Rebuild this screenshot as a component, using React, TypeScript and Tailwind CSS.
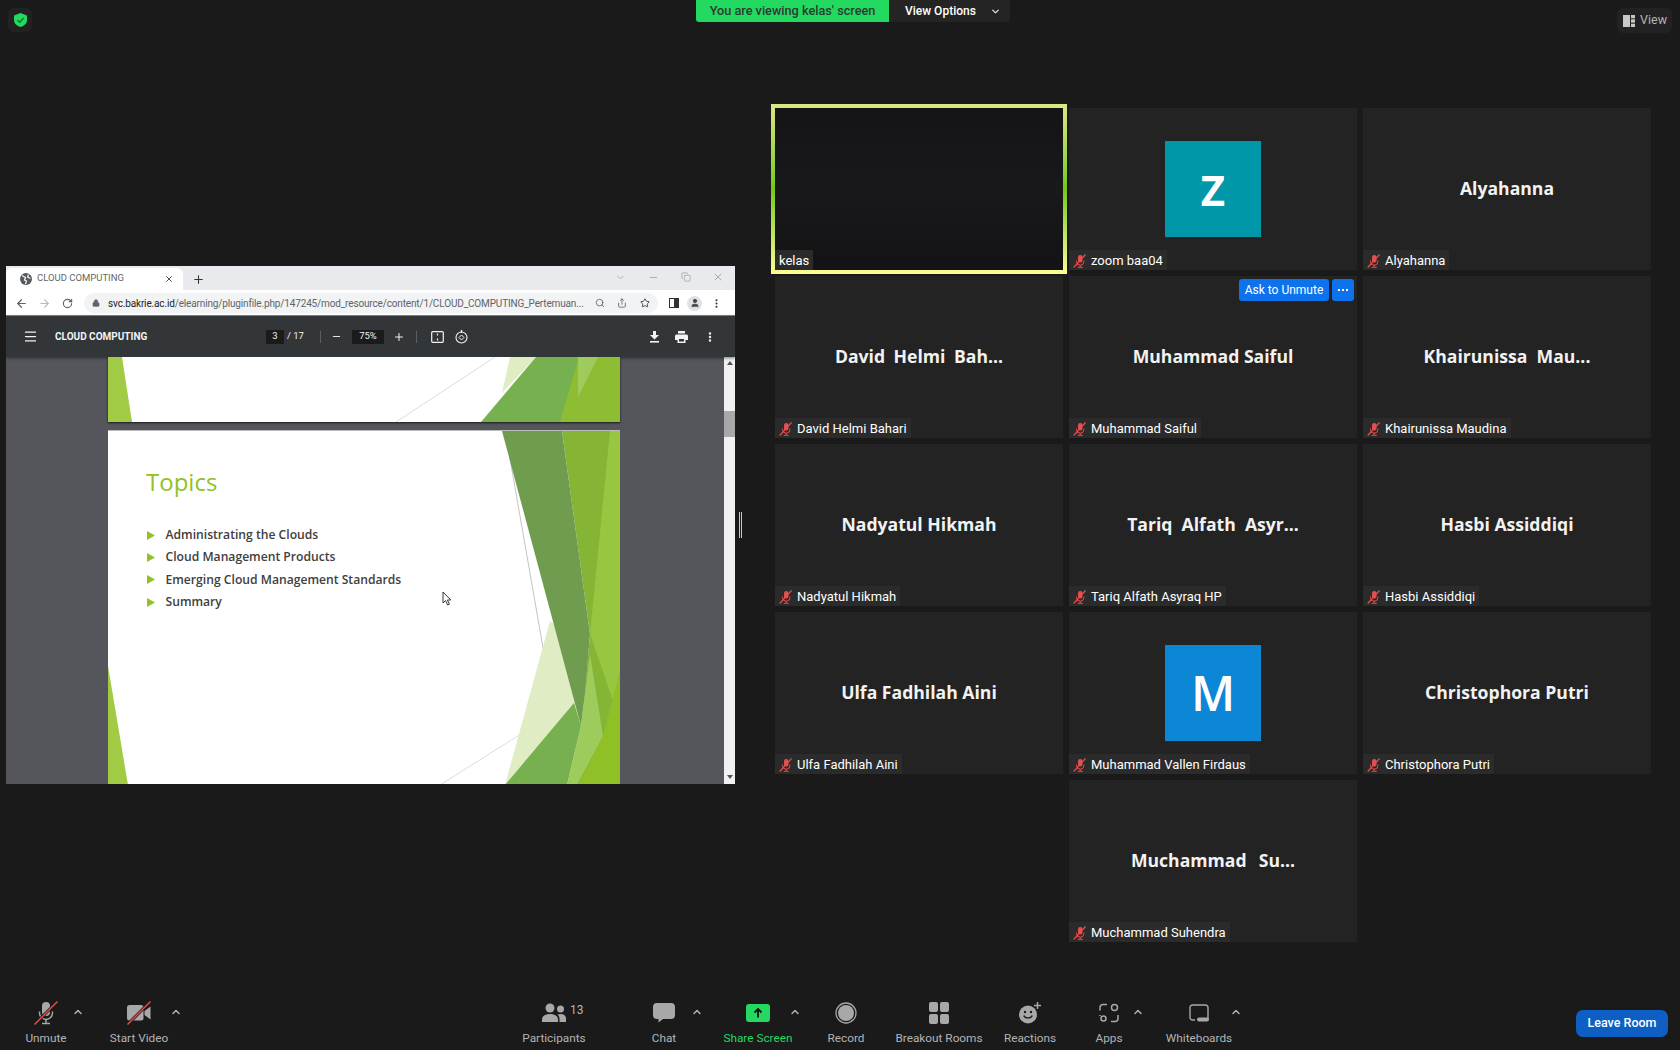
import React from "react";
import { X, Plus, ChevronDown, Minus, Copy, ArrowLeft, ArrowRight, RotateCw, Lock, Search, Share, Star, User, MoreVertical, Menu, ChevronUp } from "lucide-react";

const MutedMic = ({ size = 24 }: { size?: number }) => (
  <svg width={size} height={size} viewBox="0 0 24 24" fill="none">
    <rect x="8" y="1" width="8" height="14" rx="4" fill="currentColor" />
    <path d="M5.5 10.5v1.5a6.5 6.5 0 0 0 13 0v-1.5" stroke="currentColor" strokeWidth="1.4" />
    <path d="M12 18.5V22M8 22.5h8" stroke="currentColor" strokeWidth="1.5" />
    <path d="M0.5 23.5 23.5 0.5" stroke="#1a1a1a" strokeWidth="3" />
    <path d="M0.5 23.5 23.5 0.5" stroke="#e5484d" strokeWidth="1.5" />
  </svg>
);

const SmallMic = () => (
  <svg width="14" height="14" viewBox="0 0 14 14" fill="none" className="shrink-0">
    <rect x="5" y="1" width="4.5" height="7.5" rx="2.2" fill="#e2504f" />
    <path d="M3.5 6.5v1a3.7 3.7 0 0 0 7.4 0v-1M7.2 11v2M4.8 13.3h5" stroke="#e2504f" strokeWidth="1" />
    <path d="M0.7 13.5 12.5 0.5" stroke="#e2504f" strokeWidth="1.2" />
  </svg>
);

const MutedVideo = () => (
  <svg width="24" height="24" viewBox="0 0 24 24" fill="none">
    <rect x="0" y="4" width="16.5" height="15.5" rx="2.5" fill="#a8a8a8" />
    <path d="M17.5 10 23.5 5.5V18.5L17.5 14Z" fill="#a8a8a8" />
    <path d="M0.5 23.5 23.5 0.5" stroke="#1a1a1a" strokeWidth="3" />
    <path d="M0.5 23.5 23.5 0.5" stroke="#e5484d" strokeWidth="1.5" />
  </svg>
);

const PeopleIcon = () => (
  <svg width="24" height="20" viewBox="0 0 24 20" fill="#a8a8a8">
    <circle cx="8" cy="5" r="4.5" />
    <path d="M0 19v-2.5C0 13 3.5 11 8 11s8 2 8 5.5V19Z" />
    <circle cx="18.5" cy="6" r="3.5" />
    <path d="M17.5 19v-3c0-2-.8-3.4-2-4.5 1-.4 2-.6 3.2-.6 3.2 0 5.3 1.8 5.3 4.5V19Z" />
  </svg>
);

const ChatIcon = () => (
  <svg width="22" height="20" viewBox="0 0 22 20" fill="#a8a8a8">
    <path d="M4 0h14a4 4 0 0 1 4 4v8a4 4 0 0 1-4 4h-8l-4.5 3.5V16H4a4 4 0 0 1-4-4V4a4 4 0 0 1 4-4Z" />
  </svg>
);

const ShareIcon = () => (
  <svg width="24" height="18" viewBox="0 0 24 18">
    <rect width="24" height="18" rx="3" fill="#23d95f" />
    <path d="M12 13.5V5M8.5 8.5 12 5l3.5 3.5" stroke="#111" strokeWidth="1.8" fill="none" />
  </svg>
);

const RecordIcon = () => (
  <svg width="22" height="22" viewBox="0 0 22 22">
    <circle cx="11" cy="11" r="10" fill="none" stroke="#a8a8a8" strokeWidth="1.3" />
    <circle cx="11" cy="11" r="8" fill="#a8a8a8" />
  </svg>
);

const BreakoutIcon = () => (
  <svg width="20" height="22" viewBox="0 0 20 22" fill="#a8a8a8">
    <rect width="9" height="10" rx="2" />
    <rect x="11" width="9" height="10" rx="2" />
    <rect y="12" width="9" height="10" rx="2" />
    <rect x="11" y="12" width="9" height="10" rx="2" />
  </svg>
);

const ReactionIcon = () => (
  <svg width="24" height="24" viewBox="0 0 24 24">
    <circle cx="10" cy="13.5" r="9" fill="#a8a8a8" />
    <circle cx="7" cy="11" r="1.2" fill="#1a1a1a" />
    <circle cx="13" cy="11" r="1.2" fill="#1a1a1a" />
    <path d="M5.8 14.5c1 3.2 7.4 3.2 8.4 0" stroke="#1a1a1a" strokeWidth="1.3" fill="none" />
    <path d="M19.5 1v7M16 4.5h7" stroke="#a8a8a8" strokeWidth="1.5" />
  </svg>
);

const AppsIcon = () => (
  <svg width="20" height="20" viewBox="0 0 20 20" fill="none" stroke="#a8a8a8" strokeWidth="1.5">
    <path d="M8 1.5H4A3 3 0 0 0 1 4.5v3M1 12v1M12 18.5h4a3 3 0 0 0 3-3V12" />
    <circle cx="15.5" cy="4.5" r="3" />
    <circle cx="4.5" cy="15.5" r="2.5" />
  </svg>
);

const BoardIcon = () => (
  <svg width="20" height="18" viewBox="0 0 20 18" fill="none">
    <path d="M6 16H3.5A2.5 2.5 0 0 1 1 13.5V3.5A2.5 2.5 0 0 1 3.5 1h13A2.5 2.5 0 0 1 19 3.5v12" stroke="#a8a8a8" strokeWidth="1.4" />
    <rect x="8" y="13.5" width="12" height="4" rx="2" fill="#a8a8a8" />
  </svg>
);

const Caret = ({ cls }: { cls: string }) => (
  <div className={`w-[12px] h-[22px] flex items-center justify-center text-[#b0b0b0] ${cls}`}>
    <ChevronUp size={12} strokeWidth={3} />
  </div>
);

const Tool = ({ label, cls, color, children }: { label: string; cls: string; color?: string; children: React.ReactNode }) => (
  <div className={`flex flex-col items-center shrink-0 ${cls}`}>
    <div className="h-[24px] flex items-center justify-center relative">{children}</div>
    <div className={`mt-[5px] text-[11.8px] leading-[16px] whitespace-nowrap font-['Roboto',sans-serif] ${color ?? "text-[#b4b4b4]"}`}>{label}</div>
  </div>
);

const Cell = ({ name, nameCls, label, avatar, avatarColor, ask, active, start }: { name?: string; nameCls?: string; label: string; avatar?: string; avatarColor?: string; ask?: boolean; active?: boolean; start?: boolean }) => (
  <div className={`relative h-[162px] flex items-center justify-center ${start ? "col-start-2" : ""}`}>
    {active && (
      <div className="absolute -inset-[4px] bg-linear-to-b from-[#dde882] via-[#74c80e] to-[#fdfd92]" />
    )}
    <div className={`absolute inset-0 ${active ? "bg-linear-to-b from-[#141416] via-[#19191b] to-[#131315]" : "bg-[#232323]"}`} />
    {name && <div className={`relative pb-[2px] text-[17.6px] font-bold text-[#f2f2f2] whitespace-pre ${nameCls ?? ""}`}>{name}</div>}
    {avatar && (
      <div className={`relative w-[96px] h-[96px] flex items-center justify-center text-white ${avatarColor}`}>{avatar}</div>
    )}
    <div className="absolute left-0 bottom-0 h-[20px] bg-[#2b2b2b] flex items-center gap-[4px] pl-[4px] pr-[4px] pt-[1px] text-[13px] text-white whitespace-nowrap font-['Roboto',sans-serif]">
      {!active && <SmallMic />}
      <span>{label}</span>
    </div>
    {ask && (
      <div className="absolute top-[3px] right-[3px] flex gap-[3px] text-white font-['Roboto',sans-serif]">
        <div className="w-[90px] h-[22px] bg-[#0e72ed] rounded-[3px] flex items-center justify-center text-[12px]">Ask to Unmute</div>
        <div className="w-[22px] h-[22px] bg-[#0e72ed] rounded-[3px] flex items-center justify-center">
          <svg width="10" height="2" viewBox="0 0 10 2" fill="#fff"><rect width="2" height="2" /><rect x="4" width="2" height="2" /><rect x="8" width="2" height="2" /></svg>
        </div>
      </div>
    )}
  </div>
);

const Slide1Art = () => (
  <svg width="512" height="65" viewBox="0 0 512 65" className="absolute inset-0">
    <polygon points="0,0 14,0 24,65 0,65" fill="#a2cb45" />
    <line x1="288" y1="65" x2="387" y2="0" stroke="#dcdcdc" strokeWidth="1" />
    <polygon points="402,0 428,0 394,36" fill="#e0ecc4" />
    <polygon points="373,65 428,0 512,0 512,65" fill="#76b04f" />
    <polygon points="471,0 512,0 512,65 452,65" fill="#8ebd33" />
    <polygon points="470,0 490,0 470,40" fill="#9fcb5c" />
  </svg>
);

const Slide2Art = () => (
  <svg width="512" height="354" viewBox="0 0 512 354" className="absolute inset-0">
    <polygon points="0,235 20,354 0,354" fill="#a2cb45" />
    <line x1="401" y1="22" x2="459" y2="354" stroke="#c4c4c4" strokeWidth="1" />
    <line x1="332" y1="354" x2="478" y2="262" stroke="#dcdcdc" strokeWidth="1" />
    <polygon points="442,190 397,354 469,354 495,305 483,223" fill="#e0ecc4" />
    <polygon points="454,0 512,0 512,354 469,354 482,203" fill="#86b535" />
    <polygon points="502,0 512,0 512,290 482,203" fill="#98c640" />
    <polygon points="394,0 454,0 482,203 477,263 473,295" fill="#6f9c4e" />
    <polygon points="466,272 397,354 459,354 473,295" fill="#76b04f" />
    <polygon points="482,223 495,305 469,354 459,354 473,295" fill="#9dcb5c" />
    <polygon points="512,240 512,354 470,354 495,305" fill="#90c028" />
  </svg>
);

const Bullet = ({ text }: { text: string }) => (
  <div className="h-[22.3px] flex items-center">
    <svg width="8" height="9" viewBox="0 0 8 9" className="shrink-0"><polygon points="0,0 8,4.5 0,9" fill="#90c226" /></svg>
    <span className="ml-[10.5px] text-[12.15px] font-semibold text-[#404040] whitespace-nowrap">{text}</span>
  </div>
);

const Chrome = () => (
  <div className="w-[729px] h-[518px] flex flex-col shrink-0 overflow-hidden font-['Roboto',sans-serif]">
    {/* tab strip */}
    <div className="h-[24px] bg-[#e8eaed] flex items-end shrink-0 text-[#5f6368]">
      <div className="w-[177px] h-[22px] bg-white rounded-t-[6px] flex items-center pl-[14px] pr-[9px] pb-[1px]">
        <svg width="12" height="12" viewBox="0 0 12 12" className="shrink-0"><circle cx="6" cy="6" r="6" fill="#555a5f" /><path d="M2 2.5 5.5 4.5 4.5 7l2 1-1 3M8.5 1.5 7.5 4l3 1.5" stroke="#fff" strokeWidth="1.2" fill="none" /></svg>
        <span className="ml-[5px] text-[9.5px] text-[#666] flex-1 whitespace-nowrap">CLOUD COMPUTING</span>
        <X size={10} strokeWidth={2} className="text-[#333]" />
      </div>
      <Plus size={13} strokeWidth={2} className="ml-[9px] mb-[4px] text-[#333]" />
      <div className="ml-auto flex items-center self-start mt-[5px] text-[#aaa]">
        <ChevronDown size={11} />
        <Minus size={11} className="ml-[22px]" />
        <Copy size={10} className="ml-[22px]" />
        <X size={12} className="ml-[21px] mr-[11px]" />
      </div>
    </div>
    {/* address bar */}
    <div className="h-[26px] bg-white border-b border-[#8a8a8a] flex items-center shrink-0 text-[#5f6368] pt-[1px]">
      <ArrowLeft size={13} strokeWidth={2.2} className="ml-[9px]" />
      <ArrowRight size={13} strokeWidth={2} className="ml-[10px] text-[#bbb]" />
      <RotateCw size={11} strokeWidth={2.5} className="ml-[11px]" />
      <div className="ml-[11px] w-[574px] h-[20px] bg-[#f1f3f4] rounded-full flex items-center pl-[8px]">
        <Lock size={8} fill="#5f6368" />
        <span className="ml-[8px] w-[478px] text-[10px] text-[#5f6368] whitespace-nowrap tracking-[-0.15px]">
          <span className="text-[#222]">svc.bakrie.ac.id</span>/elearning/pluginfile.php/147245/mod_resource/content/1/CLOUD_COMPUTING_Pertemuan...
        </span>
        <Search size={10} className="ml-[9px]" />
        <Share size={10} className="ml-[12px]" />
        <Star size={10} className="ml-[13px] text-[#333]" />
      </div>
      <svg width="10" height="10" viewBox="0 0 10 10" className="ml-[11px]"><rect x="0.5" y="0.5" width="9" height="9" fill="none" stroke="#333" /><rect x="5" y="0.5" width="4.5" height="9" fill="#333" /></svg>
      <div className="ml-[8px] w-[15px] h-[15px] rounded-full bg-[#dfe1e5] flex items-center justify-center"><User size={10} fill="#444" stroke="#444" /></div>
      <MoreVertical size={11} strokeWidth={2.5} className="ml-[9px] text-[#333]" />
    </div>
    {/* pdf toolbar */}
    <div className="h-[41px] bg-[#323639] flex items-center shrink-0 text-[#f1f3f4] shadow-[0_1px_3px_rgba(0,0,0,0.5)] relative">
      <Menu size={15} className="ml-[17px]" />
      <span className="ml-[17px] w-[90px] text-[10px] font-bold whitespace-nowrap">CLOUD COMPUTING</span>
      <div className="ml-[121px] w-[18px] h-[14px] bg-[#191b1c] text-[9.5px] flex items-center justify-center">3</div>
      <span className="ml-[3px] w-[18px] text-[9.5px] whitespace-nowrap">/ 17</span>
      <div className="ml-[15px] w-px h-[12px] bg-[#5a5f63]" />
      <Minus size={11} className="ml-[10px]" />
      <div className="ml-[10px] w-[32px] h-[14px] bg-[#191b1c] text-[9.5px] flex items-center justify-center">75%</div>
      <Plus size={12} className="ml-[9px]" />
      <div className="ml-[11px] w-px h-[12px] bg-[#5a5f63]" />
      <svg width="13" height="12" viewBox="0 0 13 12" fill="none" className="ml-[14px]"><rect x="0.7" y="0.7" width="11.6" height="10.6" rx="1" stroke="#f1f3f4" strokeWidth="1.2" /><path d="M6.5 2.5v2M6.5 9.5v-2" stroke="#f1f3f4" strokeWidth="1.2" /></svg>
      <svg width="13" height="14" viewBox="0 0 13 14" fill="none" className="ml-[11px]"><circle cx="6.5" cy="7.5" r="5.5" stroke="#f1f3f4" strokeWidth="1.1" /><path d="M6.5 5 9 7.5 6.5 10 4 7.5Z" stroke="#f1f3f4" strokeWidth="1" /><path d="M6.5 0v3" stroke="#f1f3f4" strokeWidth="1.4" /></svg>
      <svg width="11" height="12" viewBox="0 0 11 12" fill="#f1f3f4" className="ml-[181px]"><path d="M4 0h3v4h3L5.5 8.5 1 4h3Z" /><rect x="1" y="10" width="9" height="1.6" /></svg>
      <svg width="13" height="12" viewBox="0 0 13 12" fill="#f1f3f4" className="ml-[15px]"><path d="M3 0h7v2.5H3ZM1.5 3.5h10A1.5 1.5 0 0 1 13 5v4h-2.500v3h-8V9H0V5a1.5 1.5 0 0 1 1.5-1.5Z" /><rect x="4" y="8" width="5" height="2.5" fill="#323639" /></svg>
      <MoreVertical size={12} strokeWidth={3} className="ml-[16px]" />
    </div>
    {/* viewer */}
    <div className="flex-1 flex min-h-0 overflow-hidden">
      <div className="flex-1 bg-[#54565b] pl-[102px] flex flex-col gap-[8px]">
        <div className="relative w-[512px] h-[65px] bg-white shrink-0 shadow-[0_1px_2px_rgba(0,0,0,0.7)]"><Slide1Art /></div>
        <div className="relative w-[512px] h-[354px] bg-white shrink-0 overflow-hidden pl-[38px] pt-[34px] border-t border-[#bbb] font-['Open_Sans',sans-serif]">
          <Slide2Art />
          <div className="relative text-[24px] leading-[34px] text-[#90c226]">Topics</div>
          <div className="relative mt-[25px] ml-[1px]">
            <Bullet text="Administrating the Clouds" />
            <Bullet text="Cloud Management Products" />
            <Bullet text="Emerging Cloud Management Standards" />
            <Bullet text="Summary" />
          </div>
          <svg width="10" height="15" viewBox="0 0 10 15" className="absolute left-[334px] top-[160px]"><path d="M1 1v11l2.6-2.4 2 4.4 1.8-.8-2-4.2h3.4Z" fill="#fff" stroke="#222" strokeWidth="0.9" /></svg>
        </div>
      </div>
      <div className="w-[11px] bg-[#f1f1f1] flex flex-col items-center shrink-0">
        <svg width="6" height="4" viewBox="0 0 6 4" className="mt-[4px]"><polygon points="3,0 6,4 0,4" fill="#505050" /></svg>
        <div className="mt-[46px] w-full h-[26px] bg-[#a8a8a8]" />
        <svg width="6" height="4" viewBox="0 0 6 4" className="mt-auto mb-[5px]"><polygon points="0,0 6,0 3,4" fill="#505050" /></svg>
      </div>
    </div>
  </div>
);

export default function App() {
  return (
    <div className="w-[1680px] h-[1050px] bg-[#1a1a1a] flex flex-col overflow-hidden font-['Open_Sans',sans-serif]">
      <header className="h-[70px] shrink-0 flex items-start">
        <div className="ml-[8px] mt-[8px] w-[24px] h-[24px] rounded-[6px] bg-[#222] flex items-center justify-center">
          <svg width="13" height="14" viewBox="0 0 13 14"><path d="M6.5 0 13 2.5V7c0 3.5-2.8 5.8-6.5 7C2.8 12.8 0 10.5 0 7V2.5Z" fill="#23d95f" /><path d="M3.5 7 5.7 9.2 9.7 5" stroke="#173" strokeWidth="1.5" fill="none" /></svg>
        </div>
        <div className="ml-[664px] h-[22px] flex rounded-b-[3px] overflow-hidden text-[12.7px] font-['Roboto',sans-serif] font-medium">
          <div className="w-[193px] bg-[#23d95f] text-[#2d3a33] flex items-center justify-center">You are viewing kelas' screen</div>
          <div className="w-[121px] bg-[#242424] text-white flex items-center pl-[16px]">
            <span className="w-[76px] font-medium text-[12px] whitespace-nowrap">View Options</span>
            <ChevronDown size={11} strokeWidth={3} className="ml-[9px] text-[#ddd]" />
          </div>
        </div>
        <div className="ml-auto mr-[8px] mt-[8px] w-[55px] h-[25px] rounded-[6px] bg-[#222] flex items-center pl-[6px] text-[#b4b4b4] text-[12.5px] font-['Roboto',sans-serif]">
          <svg width="12" height="12" viewBox="0 0 12 12" fill="#c8c8c8"><rect width="7" height="12" /><rect x="8" width="4" height="3.3" /><rect x="8" y="4.3" width="4" height="3.3" /><rect x="8" y="8.7" width="4" height="3.3" /></svg>
          <span className="ml-[5px]">View</span>
        </div>
      </header>

      <main className="flex-1 min-h-0 flex items-center pl-[6px]">
        <Chrome />
        <div className="w-[40px] shrink-0 pl-[4px] flex gap-[1px]">
          <div className="w-px h-[26px] bg-[#c8c8c8]" />
          <div className="w-px h-[26px] bg-[#c8c8c8]" />
        </div>
        <div className="grid grid-cols-[288px_288px_288px] gap-x-[6px] gap-y-[6px]">
          <Cell label="kelas" active />
          <Cell label="zoom baa04" avatar="Z" avatarColor="bg-[#0097a9] font-bold text-[42px]" />
          <Cell name="Alyahanna" label="Alyahanna" />
          <Cell name="David Helmi Bah..." nameCls="[word-spacing:4px]" label="David Helmi Bahari" />
          <Cell name="Muhammad Saiful" label="Muhammad Saiful" ask />
          <Cell name="Khairunissa  Mau..." label="Khairunissa Maudina" />
          <Cell name="Nadyatul Hikmah" label="Nadyatul Hikmah" />
          <Cell name="Tariq  Alfath  Asyr..." label="Tariq Alfath Asyraq HP" />
          <Cell name="Hasbi Assiddiqi" label="Hasbi Assiddiqi" />
          <Cell name="Ulfa Fadhilah Aini" label="Ulfa Fadhilah Aini" />
          <Cell label="Muhammad Vallen Firdaus" avatar="M" avatarColor="bg-[#0b87d6] font-semibold text-[48px]" />
          <Cell name="Christophora Putri" label="Christophora Putri" />
          <Cell name="Muchammad  Su..." nameCls="[word-spacing:1.5px]" label="Muchammad Suhendra" start />
        </div>
      </main>

      <footer className="h-[70px] shrink-0 flex items-start pt-[21px] relative">
        <Tool label="Unmute" cls="ml-[20px] w-[52px]"><span className="text-[#a8a8a8]"><MutedMic /></span></Tool>
        <Caret cls="" />
        <Tool label="Start Video" cls="ml-[24px] w-[62px]"><MutedVideo /></Tool>
        <Caret cls="" />
        <Tool label="Participants" cls="ml-[339px] w-[66px]">
          <PeopleIcon />
          <span className="absolute left-[28px] top-[0px] text-[12px] text-[#b4b4b4] font-['Roboto',sans-serif]">13</span>
        </Tool>
        <Tool label="Chat" cls="ml-[57px] w-[40px]"><ChatIcon /></Tool>
        <Caret cls="ml-[7px]" />
        <Tool label="Share Screen" cls="ml-[19px] w-[72px]" color="text-[#23d95f]"><ShareIcon /></Tool>
        <Caret cls="-ml-[5px]" />
        <Tool label="Record" cls="ml-[23px] w-[44px]"><RecordIcon /></Tool>
        <Tool label="Breakout Rooms" cls="ml-[25px] w-[92px]"><BreakoutIcon /></Tool>
        <Tool label="Reactions" cls="ml-[17px] w-[56px]"><ReactionIcon /></Tool>
        <Tool label="Apps" cls="ml-[31px] w-[40px]"><AppsIcon /></Tool>
        <Caret cls="ml-[3px]" />
        <Tool label="Whiteboards" cls="ml-[20px] w-[70px]"><BoardIcon /></Tool>
        <Caret cls="-ml-[4px]" />
        <div className="ml-auto mr-[12px] mt-[9px] w-[92px] h-[27px] rounded-[7px] bg-[#0e5fc4] text-white text-[12.5px] font-medium flex items-center justify-center font-['Roboto',sans-serif]">Leave Room</div>
      </footer>
    </div>
  );
}
